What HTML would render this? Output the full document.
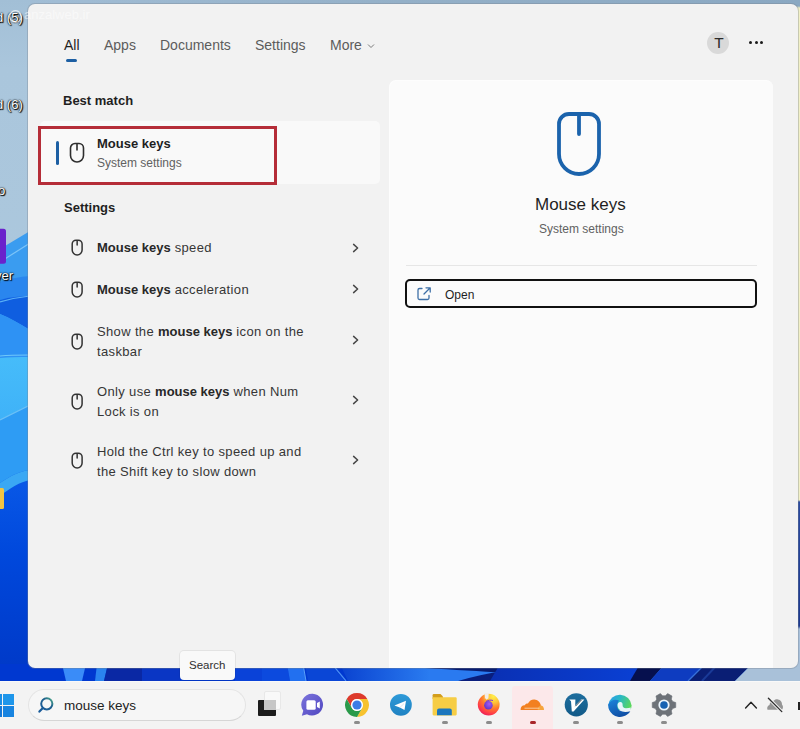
<!DOCTYPE html>
<html><head><meta charset="utf-8">
<style>
*{margin:0;padding:0;box-sizing:border-box}
html,body{width:800px;height:729px;overflow:hidden;background:#a6c2d9}
body{position:relative;font-family:"Liberation Sans",sans-serif;color:#1f1f1f}
.abs{position:absolute}
#wall-top{left:0;top:0;width:800px;height:8px;background:linear-gradient(90deg,#a2bed6,#94b0c8 50%,#8aa8c2)}
#wall-left{left:0;top:0;width:30px;height:681px;background:linear-gradient(180deg,#a8c4da 0,#a8c4da 240px,#62b0f0 250px,#3c9cf0 300px,#2a8ef0 340px,#48b4f8 380px,#2c90f0 440px,#1c6ee6 500px,#0f50d8 560px,#0a3cc8 640px,#0a38c0 681px)}
#wall-right{left:795px;top:0;width:5px;height:681px;background:linear-gradient(180deg,#8aa8c2 0,#8aa8c2 6px,#f2f0c6 8px,#f2f0c6 500px,#2a4aa0 502px,#1c3a90 626px,#a8c0da 629px,#a8c0da 681px)}
#wall-bottom{left:0;top:664px;width:800px;height:17px;background:linear-gradient(90deg,#0a3ad0 0,#0c40d8 60px,#3a8cf0 70px,#1a5ce0 90px,#2a7cf0 100px,#0a38c0 110px,#082ca8 150px,#0a3cc8 200px,#1a58e0 280px,#2a78f0 300px,#1246d0 330px,#0a36c0 400px,#3a7ce0 450px,#0a2a90 490px,#0a2a98 560px,#0c3ac8 620px,#06185a 660px,#1a48c0 700px,#0e2a88 740px,#a8c0dc 745px,#a8c0dc 800px)}

#panel{left:28px;top:4px;width:770px;height:664px;background:#f2f2f2;border-radius:7px;box-shadow:0 0 0 1px rgba(120,130,140,.35);overflow:hidden}
.tab{top:37px;font-size:14px;color:#5c5c5c;line-height:16px;white-space:nowrap}
#ul{left:66px;top:59px;width:11px;height:3px;border-radius:2px;background:#1d5fa3}

#rpane{left:389px;top:80px;width:384px;height:588px;background:#fbfbfb;border-radius:7px 7px 0 0;border-left:1px solid #fdfdfd;border-top:1px solid #fdfdfd}

.hdr{font-size:13px;font-weight:bold;color:#1f1f1f;white-space:nowrap;line-height:15px}
.item{left:97px;font-size:13px;letter-spacing:.35px;color:#363636;line-height:20px;white-space:nowrap}
.item b{letter-spacing:0;color:#282828}
.chev{left:350px;width:12px;height:12px}
.mi{left:70px;width:14px;height:18px}

#taskbar{left:0;top:681px;width:800px;height:48px;background:#f3f3f3;border-top:1px solid #f9f9f9}
.ind{top:721px;width:6px;height:3px;border-radius:2px;background:#8c8c8c}
</style></head><body>
<div id="wall-top" class="abs"></div>
<svg class="abs" style="left:0;top:0" width="30" height="681" viewBox="0 0 30 681"><defs>
<linearGradient id="wl" x1="0" y1="0" x2="0" y2="1"><stop offset="0" stop-color="#a2bfd6"/><stop offset=".1" stop-color="#aac6dc"/><stop offset="1" stop-color="#aecadf"/></linearGradient>
<linearGradient id="wb" x1="0" y1="0" x2="0" y2="1"><stop offset="0" stop-color="#0a5ae8"/><stop offset=".4" stop-color="#0048dc"/><stop offset="1" stop-color="#0038c6"/></linearGradient>
</defs>
<rect x="0" y="0" width="30" height="681" fill="url(#wl)"/>
<path d="M0 249 L30 231 V681 H0 Z" fill="#3a9cf0"/>
<path d="M0 262 L30 243" stroke="#7cc4f8" stroke-width="1.2"/>
<path d="M0 282 C10 278 20 277 30 276 V296 C20 296 10 298 0 300 Z" fill="#2a86ee"/>
<path d="M0 300 C10 297 20 296 30 296 V330 C20 324 10 318 0 314 Z" fill="#0f5ee0"/>
<path d="M0 314 C10 318 20 324 30 330 V358 C20 357 10 357 0 358 Z" fill="#2e92f4"/>
<path d="M0 302 C10 299 20 297 30 296" stroke="#5ab0f6" stroke-width="1.2" fill="none"/>
<defs><linearGradient id="wm" x1="0" y1="0" x2="0" y2="1"><stop offset="0" stop-color="#46bcfa"/><stop offset="1" stop-color="#38a8f6"/></linearGradient></defs><path d="M0 358 C10 357 20 357 30 357 V470 C20 471 10 476 0 483 Z" fill="url(#wm)"/>
<path d="M0 356 C10 355 20 355 30 355" stroke="#70c8fa" stroke-width="1.2" fill="none"/>
<path d="M0 420 L30 405 V470 C20 471 10 476 0 483 Z" fill="#2e9cf4"/>
<path d="M0 420 L30 405" stroke="#6cc0f6" stroke-width="1.2"/>
<path d="M0 483 C10 476 20 471 30 470 V681 H0 Z" fill="url(#wb)"/>
<path d="M0 483 C10 476 20 471 30 470 V480 C20 482 10 488 0 496 Z" fill="#3aa8f4"/>
<rect x="-4" y="228.8" width="10" height="35" rx="2.5" fill="#6a22cc"/>
<rect x="-4" y="488" width="8" height="21" rx="1.5" fill="#f2c441"/>
</svg>
<div class="abs" style="left:-4px;top:10px;font-size:13px;line-height:16px;color:#fff;white-space:nowrap;text-shadow:0 0 1px #000,0 0 2px #000,1px 1px 1px #000">d (5)</div>
<div class="abs" style="left:-4px;top:97px;font-size:13px;line-height:16px;color:#fff;white-space:nowrap;text-shadow:0 0 1px #000,0 0 2px #000,1px 1px 1px #000">d (6)</div>
<div class="abs" style="left:-2px;top:183px;font-size:13px;line-height:16px;color:#fff;white-space:nowrap;text-shadow:0 0 1px #000,0 0 2px #000,1px 1px 1px #000">o</div>
<div class="abs" style="left:-5px;top:268px;font-size:13px;line-height:16px;color:#fff;white-space:nowrap;text-shadow:0 0 1px #000,0 0 2px #000,1px 1px 1px #000">yer</div>
<div id="wall-right" class="abs"></div>
<svg class="abs" style="left:0;top:664px" width="800" height="17" viewBox="0 664 800 17">
<defs><linearGradient id="bs1" x1="0" y1="0" x2="1" y2="0"><stop offset="0" stop-color="#0a30b4"/><stop offset="1" stop-color="#0a40d4"/></linearGradient></defs>
<rect x="0" y="664" width="800" height="17" fill="#0038d0"/>
<path d="M62 664 H86 L82 681 H66 Z" fill="#3a8cf8"/>
<path d="M97 664 H108 L104 681 H95 Z" fill="#2a84f0"/>
<path d="M108 664 H142 V681 H104 Z" fill="#0a28a4"/>
<path d="M142 664 H180 V681 H142 Z" fill="#0a36c4"/>
<path d="M235 664 H262 V681 H235 Z" fill="#0a42d8"/>
<path d="M262 664 H287 L290 681 H262 Z" fill="#0c4ade"/>
<path d="M287 664 H303 L306 681 H290 Z" fill="#2270f0"/>
<path d="M303 664 L306 681" stroke="#5aa0f8" stroke-width="1"/>
<path d="M305 664 H330 L345 681 H308 Z" fill="#0a46d6"/>
<path d="M332 664 L346 681" stroke="#4a90f4" stroke-width="1.2"/>
<defs><linearGradient id="bs2" x1="0" y1="0" x2="1" y2="0"><stop offset="0" stop-color="#0a42d0"/><stop offset="1" stop-color="#2a7cf0"/></linearGradient></defs>
<path d="M340 664 H430 V681 H348 Z" fill="url(#bs2)"/>
<path d="M430 664 H800 V681 H430 Z" fill="#2a7af0"/>
<path d="M425 664 H505 V673 C480 671 455 670 425 668 Z" fill="#081c70"/>
<path d="M505 664 V681 H458 C472 677 488 673 505 671 Z" fill="#0a1e7c"/>
<path d="M500 664 H640 V681 H490 Z" fill="url(#bs1)"/>
<path d="M640 664 H665 L650 681 H630 Z" fill="#06104e"/>
<path d="M665 664 H705 L688 681 H650 Z" fill="#0e3cc0"/>
<path d="M705 664 L688 681" stroke="#3a70d8" stroke-width="1.2"/>
<path d="M706 664 H752 L735 681 H689 Z" fill="#0a1e74"/>
<path d="M718 664 L702 681" stroke="#1a3a98" stroke-width="2"/>
<path d="M752 664 H800 V681 H735 Z" fill="#a9c1d9"/>
</svg>

<div id="panel" class="abs"></div>

<!-- tabs -->
<div class="abs tab" style="left:64px;color:#1f1f1f">All</div>
<div id="ul" class="abs"></div>
<div class="abs tab" style="left:104px">Apps</div>
<div class="abs tab" style="left:160px">Documents</div>
<div class="abs tab" style="left:255px">Settings</div>
<div class="abs tab" style="left:330px">More</div>
<svg class="abs" style="left:366px;top:42px" width="10" height="8" viewBox="0 0 10 8"><path d="M2 2.5 L5 5.5 L8 2.5" fill="none" stroke="#7a7a7a" stroke-width="1"/></svg>

<!-- avatar -->
<div class="abs" style="left:707px;top:32px;width:22px;height:22px;border-radius:50%;background:#d9d9d9"></div>
<div class="abs" style="left:708px;top:34px;width:22px;text-align:center;font-size:15.5px;line-height:18px;color:#2b2b2b">T</div>
<div class="abs" style="left:749px;top:41px;width:3px;height:3px;border-radius:50%;background:#1a1a1a"></div>
<div class="abs" style="left:754.5px;top:41px;width:3px;height:3px;border-radius:50%;background:#1a1a1a"></div>
<div class="abs" style="left:760px;top:41px;width:3px;height:3px;border-radius:50%;background:#1a1a1a"></div>

<!-- best match -->
<div class="abs hdr" style="left:63px;top:93px">Best match</div>
<div class="abs" style="left:40px;top:121px;width:340px;height:63px;background:#f9f9f9;border-radius:5px"></div>
<div class="abs" style="left:56px;top:141px;width:3px;height:24px;border-radius:2px;background:#1d5fa3"></div>
<svg class="abs" style="left:68px;top:139px" width="18" height="26" viewBox="0 0 18 26"><path d="M2.5 9 A4.5 4.5 0 0 1 7 4.5 H11 A4.5 4.5 0 0 1 15.5 9 V16.5 A6.5 6.5 0 0 1 2.5 16.5 Z M9 4.5 V11" fill="none" stroke="#2e2e2e" stroke-width="1.6" stroke-linecap="round"/></svg>
<div class="abs hdr" style="left:97px;top:136px">Mouse keys</div>
<div class="abs" style="left:97px;top:156px;font-size:12px;color:#616161;line-height:14px;white-space:nowrap">System settings</div>
<div class="abs" style="left:38px;top:126px;width:239px;height:59px;border:3px solid #b52d38"></div>

<!-- settings -->
<div class="abs hdr" style="left:64px;top:200px">Settings</div>

<div class="abs item" style="top:238px"><b>Mouse keys</b> speed</div>
<div class="abs item" style="top:280px"><b>Mouse keys</b> acceleration</div>
<div class="abs item" style="top:322px">Show the <b>mouse keys</b> icon on the<br>taskbar</div>
<div class="abs item" style="top:382px">Only use <b>mouse keys</b> when Num<br>Lock is on</div>
<div class="abs item" style="top:442px">Hold the Ctrl key to speed up and<br>the Shift key to slow down</div>

<svg class="abs" style="left:69px;top:237px" width="16" height="21" viewBox="0 0 16 21"><path d="M3.2 7 A3.8 3.8 0 0 1 7 3.2 H9.3 A3.8 3.8 0 0 1 13.1 7 V13 A4.95 4.95 0 0 1 3.2 13 Z M8.15 3.2 V8" fill="none" stroke="#333" stroke-width="1.5" stroke-linecap="round"/></svg>
<svg class="abs" style="left:350px;top:241.5px" width="12" height="12" viewBox="0 0 12 12"><path d="M3.6 2.4 L7.6 6 L3.6 9.6" fill="none" stroke="#474747" stroke-width="1.5" stroke-linecap="round" stroke-linejoin="round"/></svg>
<svg class="abs" style="left:69px;top:279px" width="16" height="21" viewBox="0 0 16 21"><path d="M3.2 7 A3.8 3.8 0 0 1 7 3.2 H9.3 A3.8 3.8 0 0 1 13.1 7 V13 A4.95 4.95 0 0 1 3.2 13 Z M8.15 3.2 V8" fill="none" stroke="#333" stroke-width="1.5" stroke-linecap="round"/></svg>
<svg class="abs" style="left:350px;top:283px" width="12" height="12" viewBox="0 0 12 12"><path d="M3.6 2.4 L7.6 6 L3.6 9.6" fill="none" stroke="#474747" stroke-width="1.5" stroke-linecap="round" stroke-linejoin="round"/></svg>
<svg class="abs" style="left:69px;top:331px" width="16" height="21" viewBox="0 0 16 21"><path d="M3.2 7 A3.8 3.8 0 0 1 7 3.2 H9.3 A3.8 3.8 0 0 1 13.1 7 V13 A4.95 4.95 0 0 1 3.2 13 Z M8.15 3.2 V8" fill="none" stroke="#333" stroke-width="1.5" stroke-linecap="round"/></svg>
<svg class="abs" style="left:350px;top:334px" width="12" height="12" viewBox="0 0 12 12"><path d="M3.6 2.4 L7.6 6 L3.6 9.6" fill="none" stroke="#474747" stroke-width="1.5" stroke-linecap="round" stroke-linejoin="round"/></svg>
<svg class="abs" style="left:69px;top:390.5px" width="16" height="21" viewBox="0 0 16 21"><path d="M3.2 7 A3.8 3.8 0 0 1 7 3.2 H9.3 A3.8 3.8 0 0 1 13.1 7 V13 A4.95 4.95 0 0 1 3.2 13 Z M8.15 3.2 V8" fill="none" stroke="#333" stroke-width="1.5" stroke-linecap="round"/></svg>
<svg class="abs" style="left:350px;top:393.5px" width="12" height="12" viewBox="0 0 12 12"><path d="M3.6 2.4 L7.6 6 L3.6 9.6" fill="none" stroke="#474747" stroke-width="1.5" stroke-linecap="round" stroke-linejoin="round"/></svg>
<svg class="abs" style="left:69px;top:450px" width="16" height="21" viewBox="0 0 16 21"><path d="M3.2 7 A3.8 3.8 0 0 1 7 3.2 H9.3 A3.8 3.8 0 0 1 13.1 7 V13 A4.95 4.95 0 0 1 3.2 13 Z M8.15 3.2 V8" fill="none" stroke="#333" stroke-width="1.5" stroke-linecap="round"/></svg>
<svg class="abs" style="left:350px;top:453.5px" width="12" height="12" viewBox="0 0 12 12"><path d="M3.6 2.4 L7.6 6 L3.6 9.6" fill="none" stroke="#474747" stroke-width="1.5" stroke-linecap="round" stroke-linejoin="round"/></svg>
<!-- right pane -->
<div id="rpane" class="abs"></div>
<svg class="abs" style="left:550px;top:105px" width="60" height="80" viewBox="550 105 60 80"><path d="M559 124 A10 10 0 0 1 569 114 H589 A10 10 0 0 1 599 124 V154 A20 20 0 0 1 559 154 Z M579 114 V134" fill="none" stroke="#1b63ac" stroke-width="3.8" stroke-linecap="round"/></svg>
<div class="abs" style="left:535px;top:195px;font-size:17px;line-height:20px;color:#1f1f1f;white-space:nowrap">Mouse keys</div>
<div class="abs" style="left:539px;top:222px;font-size:12px;line-height:14px;color:#616161;white-space:nowrap">System settings</div>
<div class="abs" style="left:406px;top:264.5px;width:351px;height:1px;background:#e6e6e6"></div>
<div class="abs" style="left:405px;top:278.5px;width:352px;height:29.5px;border:2px solid #111;border-radius:5px;background:#fbfbfb"></div>
<svg class="abs" style="left:416px;top:286px" width="16" height="15" viewBox="0 0 16 15"><path d="M6 2.5 H3.5 A1.5 1.5 0 0 0 2 4 V12 A1.5 1.5 0 0 0 3.5 13.5 H11.5 A1.5 1.5 0 0 0 13 12 V9.5 M8 8 L14 2 M10 1.8 H14.2 V6" fill="none" stroke="#3d6fa6" stroke-width="1.3" stroke-linecap="round" stroke-linejoin="round"/></svg>
<div class="abs" style="left:445px;top:288px;font-size:12px;line-height:14px;color:#1f1f1f">Open</div>

<div class="abs" style="left:24px;top:7px;font-size:13px;line-height:16px;color:rgba(255,255,255,.5);white-space:nowrap">anzalweb.ir</div>
<svg class="abs" style="left:8px;top:9px" width="16" height="16" viewBox="0 0 16 16"><circle cx="7.5" cy="7.5" r="5.8" fill="none" stroke="rgba(255,255,255,.7)" stroke-width="1.2"/></svg>
<!-- tooltip -->
<div class="abs" style="left:180px;top:650.5px;width:55px;height:29.5px;background:#f9f9f9;border-radius:4px;box-shadow:0 0 0 1px rgba(0,0,0,.06)"></div>
<div class="abs" style="left:189px;top:658px;font-size:11.5px;line-height:14px;color:#303030">Search</div>

<!-- taskbar -->
<div id="taskbar" class="abs"></div>
<!-- win logo -->
<div class="abs" style="left:-9px;top:694px;width:11px;height:11px;background:#1a8ee6"></div>
<div class="abs" style="left:3px;top:694px;width:11px;height:11px;background:#1e96ea"></div>
<div class="abs" style="left:-9px;top:706px;width:11px;height:11px;background:#1478d8"></div>
<div class="abs" style="left:3px;top:706px;width:11px;height:11px;background:#1884e0"></div>
<!-- search box -->
<div class="abs" style="left:28px;top:689px;width:218px;height:32px;border-radius:16px;background:#f6f6f6;border:1px solid #e4e4e4;border-bottom-color:#d6d6d6"></div>
<svg class="abs" style="left:36px;top:694px" width="22" height="22" viewBox="36 694 22 22"><defs><linearGradient id="sg" x1="0" y1="1" x2="1" y2="0"><stop offset="0" stop-color="#1a5c9a"/><stop offset=".6" stop-color="#1e5f8c"/><stop offset="1" stop-color="#4fb08a"/></linearGradient></defs><circle cx="46.8" cy="703.8" r="5.6" fill="none" stroke="url(#sg)" stroke-width="2"/><path d="M42.6 708.2 L39.4 711.6" stroke="#1a5c9a" stroke-width="2.2" stroke-linecap="round"/></svg>
<div class="abs" style="left:64px;top:698px;font-size:13.5px;line-height:16px;color:#222;white-space:nowrap">mouse keys</div>
<!-- task view -->
<div class="abs" style="left:264px;top:691px;width:17px;height:18.5px;background:#f9f9f9;border:1px solid #e8e8e8;border-radius:2px"></div>
<div class="abs" style="left:258px;top:700px;width:18px;height:16px;background:#1c1c1c;border-radius:1px"></div>
<div class="abs" style="left:264px;top:700px;width:12px;height:10px;background:#c6c6c6"></div>
<!-- teams -->
<svg class="abs" style="left:298px;top:690px" width="30" height="30" viewBox="298 690 30 30"><defs><linearGradient id="tg" x1="0" y1="0" x2="1" y2="1"><stop offset="0" stop-color="#7c74dc"/><stop offset="1" stop-color="#4f46c0"/></linearGradient></defs><path d="M312.8 693.7 A10.9 10.9 0 1 1 307 714.2 L301.8 715.8 L303.3 710.8 A10.9 10.9 0 0 1 312.8 693.7 Z" fill="url(#tg)"/><rect x="306.4" y="700.3" width="9.3" height="9.4" rx="1.5" fill="#fff"/><path d="M317 703 L319.8 701.6 V708.6 L317 707 Z" fill="#fff"/></svg>
<!-- chrome -->
<svg class="abs" style="left:343px;top:691px" width="28" height="28" viewBox="-14 -14 28 28"><path d="M10.306 -5.95 A11.9 11.9 0 0 0 -10.306 -5.95 L-5.153 2.975 A5.95 5.95 0 0 1 0 -5.95 Z" fill="#dd3a2c"/><path d="M0 11.9 A11.9 11.9 0 0 0 10.306 -5.95 L0 -5.95 A5.95 5.95 0 0 1 5.153 2.975 Z" fill="#f7c22e"/><path d="M-10.306 -5.95 A11.9 11.9 0 0 0 0 11.9 L5.153 2.975 A5.95 5.95 0 0 1 -5.153 2.975 Z" fill="#2a9a4a"/><circle r="5.95" fill="#fff"/><circle r="4.6" fill="#3a7ce6"/></svg>
<!-- telegram -->
<svg class="abs" style="left:388px;top:692px" width="26" height="26" viewBox="388 692 26 26"><defs><linearGradient id="tlg" x1="0" y1="0" x2="0" y2="1"><stop offset="0" stop-color="#2e9ad8"/><stop offset="1" stop-color="#1f82c2"/></linearGradient></defs><circle cx="400.9" cy="704.8" r="10.9" fill="url(#tlg)"/><path d="M394.4 705.5 L406 700.8 L404.5 710 L399.8 707.6 Z" fill="#fff"/><path d="M399.8 707.6 L404 703.6" stroke="#c8dcea" stroke-width=".7"/></svg>
<!-- folder -->
<svg class="abs" style="left:430px;top:692px" width="30" height="26" viewBox="430 692 30 26"><path d="M432.6 695.2 A1.2 1.2 0 0 1 433.8 694 H440.5 L443 696.6 V699 H432.6 Z" fill="#d39e1c"/><path d="M432.6 697.2 H455.6 A1.1 1.1 0 0 1 456.7 698.3 V714.3 A1.1 1.1 0 0 1 455.6 715.4 H433.7 A1.1 1.1 0 0 1 432.6 714.3 Z" fill="#f6cd45"/><path d="M437 715.2 V710.5 A2 2 0 0 1 439 708.5 H449.8 A2 2 0 0 1 451.8 710.5 V715.2 Z" fill="#1b76bd"/></svg>
<!-- firefox -->
<svg class="abs" style="left:474px;top:690px" width="30" height="30" viewBox="474 690 30 30"><defs><radialGradient id="ffg" cx=".72" cy=".12" r="1" fx=".72" fy=".12"><stop offset="0" stop-color="#fff04a"/><stop offset=".3" stop-color="#ffc238"/><stop offset=".55" stop-color="#ff7a2c"/><stop offset=".8" stop-color="#ff3c48"/><stop offset="1" stop-color="#e2165c"/></radialGradient><radialGradient id="ffp" cx=".6" cy=".35" r=".75"><stop offset="0" stop-color="#a65af2"/><stop offset="1" stop-color="#5530c4"/></radialGradient></defs><circle cx="488.7" cy="704.6" r="10.9" fill="url(#ffg)"/><path d="M484.6 693 H488.8 L488.4 698.4 C487.6 698.8 486.9 699.2 486.3 699.8 L485.6 698.3 L484.9 698.9 Z" fill="#f2ede8"/><circle cx="488.4" cy="705.3" r="4.3" fill="url(#ffp)"/><path d="M486.2 701.3 C488 700 490.6 699.8 492.6 700.4" stroke="#7a36d2" stroke-width="1" fill="none" stroke-linecap="round"/></svg>
<!-- cloudflare -->
<div class="abs" style="left:512px;top:685.5px;width:40.5px;height:44px;background:#fce8ea;border-radius:3px 3px 0 0"></div>
<svg class="abs" style="left:518px;top:696px" width="28" height="16" viewBox="518 696 28 16"><path d="M520.6 710 C520.4 707.2 522.2 705.2 524.8 705.3 C525.4 704 526.6 703.4 528 703.6 C529 700.8 531.6 699.3 534.3 699.4 C537.6 699.5 540.2 701.8 540.8 705 L541 710 Z" fill="#f28020"/><path d="M537.6 710 C537.8 707.2 539.4 705.6 541.2 705.6 C542.9 705.7 544 707.6 544 710 Z" fill="#f6a43c"/><path d="M524.5 708.2 H539.5" stroke="#fbd0a8" stroke-width=".9"/></svg>
<!-- V -->
<svg class="abs" style="left:562px;top:691px" width="28" height="28" viewBox="562 691 28 28"><defs><linearGradient id="vg" x1="0" y1="0" x2="0" y2="1"><stop offset="0" stop-color="#1d6e9e"/><stop offset="1" stop-color="#125a88"/></linearGradient></defs><circle cx="576.3" cy="704.8" r="11.6" fill="url(#vg)"/><path d="M569.2 699.4 H575.4 L575.2 705.6 L581 699.4 H584.4 L573.6 711.6 H571.8 L571 701.2 Z" fill="#fff"/><path d="M575.4 706.2 L581.6 699.8" stroke="#0a2840" stroke-width=".9"/></svg>
<!-- edge -->
<svg class="abs" style="left:606px;top:691px" width="28" height="28" viewBox="606 691 28 28"><defs><linearGradient id="eg1" x1="0" y1=".3" x2="1" y2=".6"><stop offset="0" stop-color="#2a9ee8"/><stop offset=".45" stop-color="#2ab8c4"/><stop offset="1" stop-color="#5ad85a"/></linearGradient><linearGradient id="eg2" x1="0" y1="0" x2=".5" y2="1"><stop offset="0" stop-color="#1d86dc"/><stop offset="1" stop-color="#1050a6"/></linearGradient></defs><path d="M608.3 705 A11.7 11.7 0 0 1 631.6 705.6 C631.5 707 631.2 708.2 630.8 709.2 L618 710 L610 708 Z" fill="url(#eg1)"/><path d="M608.2 704.5 A11.7 11.7 0 0 0 623.5 716.3 C626.5 715.4 628.9 713.5 630.3 711.2 C627 712.2 622.5 712.3 619.8 710.6 C617.3 709 616.6 706 617.5 703.5 C618 701.8 618.8 700.9 619 700.6 C615.5 698.6 610.5 699.6 608.2 704.5 Z" fill="url(#eg2)"/><path d="M617.6 705.5 C617.4 703.2 618.8 701.9 620.4 702 C622 702.1 622.8 703.4 622.6 705 C622.4 706.8 623.6 708.2 626 708.3 C627.8 708.3 629.4 708 630.9 707.6 L630.6 709.8 C628 710.9 623.5 711.3 620.8 710.3 C618.8 709.5 617.7 707.6 617.6 705.5 Z" fill="#e6f5fa"/></svg>
<!-- settings gear -->
<svg class="abs" style="left:649.8px;top:691.1px" width="28" height="28" viewBox="-14 -14 28 28"><path fill="#6d7278" stroke="#6d7278" stroke-width=".6" stroke-linejoin="round" d="M8.62 -3.48 L11.74 -2.49 L11.74 2.49 L8.62 3.48 A9.3 9.3 0 0 1 7.33 5.73 L8.03 8.92 L3.71 11.41 L1.29 9.21 A9.3 9.3 0 0 1 -1.29 9.21 L-3.71 11.41 L-8.03 8.92 L-7.33 5.73 A9.3 9.3 0 0 1 -8.62 3.48 L-11.74 2.49 L-11.74 -2.49 L-8.62 -3.48 A9.3 9.3 0 0 1 -7.33 -5.73 L-8.03 -8.92 L-3.71 -11.41 L-1.29 -9.21 A9.3 9.3 0 0 1 1.29 -9.21 L3.71 -11.41 L8.03 -8.92 L7.33 -5.73 A9.3 9.3 0 0 1 8.62 -3.48 Z"/><circle r="5.6" fill="#eaf4fb"/><circle r="3.8" fill="#1662b2"/></svg>
<!-- tray -->
<svg class="abs" style="left:742px;top:698px" width="18" height="14" viewBox="742 698 18 14"><path d="M745.6 708 L751 702.3 L756.4 708" fill="none" stroke="#222" stroke-width="1.4" stroke-linecap="round" stroke-linejoin="round"/></svg>
<svg class="abs" style="left:764px;top:695px" width="22" height="20" viewBox="764 695 22 20"><path d="M767.5 709.7 C766.8 708 767.3 705.5 769.5 705 C769.7 702.5 771.5 700.8 773.8 700.8 C775 699.5 776.5 699.2 778 699.4 C780.5 699.8 782.2 702 782 704.6 C783.3 705.8 783.4 708.5 782 709.7 Z" fill="#959595"/><path d="M768.4 698.2 L781.8 711.6" stroke="#f3f3f3" stroke-width="3.2" stroke-linecap="round"/><path d="M768.4 698.2 L781.8 711.6" stroke="#2b2b2b" stroke-width="1.3" stroke-linecap="round"/></svg>
<div class="abs" style="left:798px;top:702px;width:2px;height:8px;background:#222"></div>
<!-- indicators -->
<div class="abs ind" style="left:354px"></div>
<div class="abs ind" style="left:442px"></div>
<div class="abs ind" style="left:486px"></div>
<div class="abs ind" style="left:529.5px;background:#a8262a"></div>
<div class="abs ind" style="left:573px"></div>
<div class="abs ind" style="left:617px"></div>
<div class="abs ind" style="left:661px"></div>


</body></html>
